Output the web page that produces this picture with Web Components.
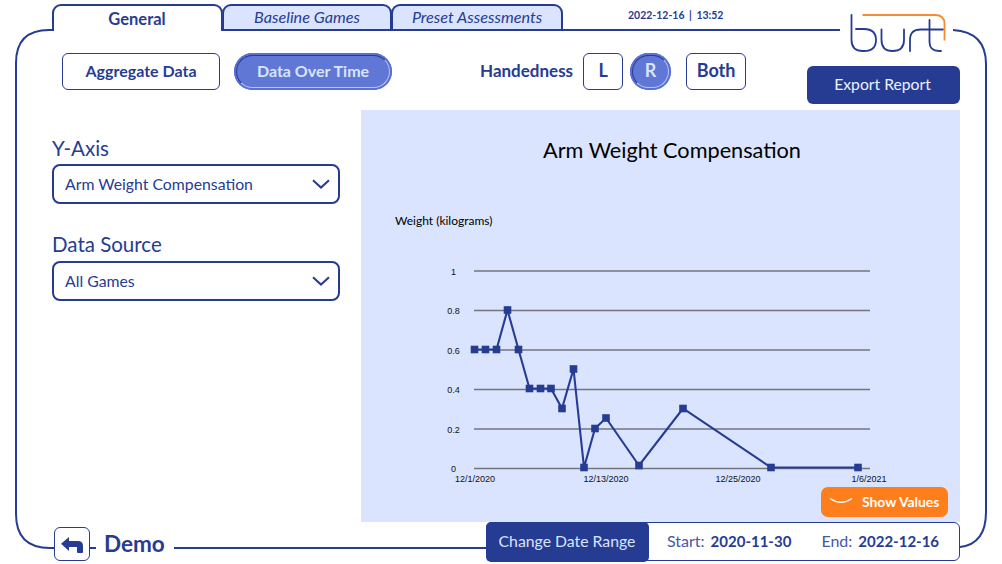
<!DOCTYPE html>
<html>
<head>
<meta charset="utf-8">
<title>Burt report</title>
<style>
  html, body { margin: 0; padding: 0; background: #fff; }
  body { font-family: Lato, "Liberation Sans", sans-serif; color: #263c93; }
</style>
</head>
<body>
<app-shell></app-shell>

<script>
const NAVY = '#263c93'

class TabBar extends HTMLElement {
  constructor() {
    super()
    this.attachShadow({ mode: 'open' })
    this.shadowRoot.innerHTML = `
      <style>
        :host { display: flex; height: 31px; padding-left: 52px; align-items: stretch; box-sizing: border-box; padding-top: 4px; }
        .tab {
          box-sizing: border-box;
          border: 2px solid ${NAVY};
          border-radius: 9px 9px 0 0;
          background: #dae4fe;
          font: italic 16.2px Lato, sans-serif;
          text-align: center;
          line-height: 22px;
          height: 27px;
          margin-right: -1px;
        }
        .tab.active {
          background: #fff;
          border-bottom: 0;
          font: bold 16.5px Lato, sans-serif;
          line-height: 27px;
        }
        .general { width: 171px; padding-right: 1px; }
        .baseline { width: 170px; }
        .preset { width: 172px; }
      </style>
      <div class="tab active general">General</div>
      <div class="tab baseline">Baseline Games</div>
      <div class="tab preset">Preset Assessments</div>
    `
  }
}

class ToggleButton extends HTMLElement {
  constructor() {
    super()
    this.attachShadow({ mode: 'open' })
    this.shadowRoot.innerHTML = `
      <style>
        :host {
          display: flex;
          position: relative;
          box-sizing: border-box;
          height: 37px;
          border: 1.5px solid ${NAVY};
          border-radius: 6px;
          background: #fff;
          font: bold 16px Lato, sans-serif;
          color: ${NAVY};
        }
        :host([active]) {
          border: 0;
          border-radius: 19px;
          background: #6077d6;
          color: #d9e4fd;
          box-shadow: inset 0 0 0 3px #5a70d2;
        }
        .ring { display: none; }
        :host([active]) .ring {
          display: block;
          position: absolute;
          inset: 2px;
          border-radius: 17px;
          border: 1.5px solid #b9c6f2;
          border-top-color: #263c93;
          border-left-color: #263c93;
        }
        .wrap { display: flex; position: absolute; inset: 0; align-items: center; justify-content: center; padding-bottom: 3px; box-sizing: border-box; }
      </style>
      <span class="ring"></span>
      <span class="wrap"><slot></slot></span>
    `
  }
}

class SelectBox extends HTMLElement {
  constructor() {
    super()
    this.attachShadow({ mode: 'open' })
    this.shadowRoot.innerHTML = `
      <style>
        :host { display: block; }
        label {
          display: block;
          font: 20.5px/24px Lato, sans-serif;
          color: ${NAVY};
          margin-top: var(--label-top, 0);
          margin-bottom: var(--label-gap, 5px);
        }
        .box {
          box-sizing: border-box;
          height: 40px;
          display: flex;
          align-items: center;
          justify-content: space-between;
          padding: 0 8px 2px 11px;
          border: 2px solid ${NAVY};
          border-radius: 8px;
          font: 15.8px Lato, sans-serif;
          background: #fff;
        }
        svg { display: block; margin-top: 2px; }
      </style>
      <label>${this.getAttribute('label')}</label>
      <div class="box">
        <span>${this.getAttribute('value')}</span>
        <svg width="18" height="10" viewBox="0 0 18 10"><path d="M1 1.2 L9 8.6 L17 1.2" fill="none" stroke="${NAVY}" stroke-width="2"/></svg>
      </div>
    `
  }
}

class LineChart extends HTMLElement {
  constructor() {
    super()
    this.attachShadow({ mode: 'open' })
    const points = [
      [474.5, 349.5], [485.5, 349.5], [496.5, 349.5], [507.5, 310], [518.5, 349.5],
      [529.5, 388.5], [540.5, 388.5], [551, 388.5], [562, 408.5], [573.5, 369],
      [584, 467.5], [595, 428.5], [606, 418], [639, 465.5], [683, 408.5],
      [771, 467.5], [858, 467.5],
    ]
    const yTicks = [['1', 271], ['0.8', 310.5], ['0.6', 350], ['0.4', 389.5], ['0.2', 429], ['0', 468.5]]
    const grid = yTicks.map(([t, y]) => `
      <line x1="474" x2="870" y1="${y}" y2="${y}" stroke="#73757c" stroke-width="1.5"/>
      <text x="453.5" y="${y + 3.5}" text-anchor="middle" class="tick">${t}</text>
    `).join('')
    const xTicks = [['12/1/2020', 475], ['12/13/2020', 606], ['12/25/2020', 738], ['1/6/2021', 869]]
      .map(([t, x]) => `<text x="${x}" y="481.5" text-anchor="middle" class="tick">${t}</text>`).join('')
    const marks = points.map(([x, y]) => `<rect x="${x - 3.8}" y="${y - 3.8}" width="7.6" height="7.6" fill="${NAVY}"/>`).join('')
    // the svg viewBox keeps page coordinates so the numbers above can be read against the screenshot
    this.shadowRoot.innerHTML = `
      <style>
        :host { display: block; position: relative; background: #dae4fe; }
        svg { display: block; width: 100%; height: 100%; }
        .title { font: 21.7px Lato, sans-serif; fill: #000; }
        .axis { font: 12px Lato, sans-serif; fill: #000; }
        .tick { font: 9px "Liberation Sans", sans-serif; fill: #111; }
      </style>
      <svg viewBox="361 110 599 412">
        <text x="672" y="158" text-anchor="middle" class="title">Arm Weight Compensation</text>
        <text x="395" y="225" class="axis">Weight (kilograms)</text>
        ${grid}
        ${xTicks}
        <polyline points="${points.map((p) => p.join(',')).join(' ')}" fill="none" stroke="${NAVY}" stroke-width="2.1"/>
        ${marks}
      </svg>
      <slot></slot>
    `
  }
}

class ShowValues extends HTMLElement {
  constructor() {
    super()
    this.attachShadow({ mode: 'open' })
    this.shadowRoot.innerHTML = `
      <style>
        :host {
          position: absolute;
          right: 12px;
          bottom: 5px;
          display: flex;
          box-sizing: border-box;
          width: 127px;
          height: 30px;
          align-items: center;
          gap: 9px;
          padding: 0 0 2px 8px;
          background: #fd7e1a;
          border-radius: 7px;
          color: #fff;
          font: bold 13.9px Lato, sans-serif;
        }
      </style>
      <svg width="24" height="8" viewBox="0 0 24 8"><path d="M1 1.5 Q12 9 23 1.5" fill="none" stroke="#fff" stroke-width="1.5"/></svg>
      <span>Show Values</span>
    `
  }
}

class BurtLogo extends HTMLElement {
  constructor() {
    super()
    this.attachShadow({ mode: 'open' })
    this.shadowRoot.innerHTML = `
      <style>
        :host { display: block; width: 98px; height: 40px; }
        svg { display: block; }
      </style>
      <svg width="98" height="40" viewBox="850 12 98 40" role="img" aria-label="burt">
        <g fill="none" stroke="${NAVY}" stroke-width="1.8" stroke-linecap="round">
          <path d="M851.5 15 V40 Q851.5 51 863 51 H864 Q876 51 876 40 Q876 29 864 29 H856"/>
          <path d="M881.5 29.5 V40 Q881.5 51 892.5 51 Q904 51 904 40 V29.5"/>
          <path d="M910 51 V40 Q910 29.5 921 29.5 H943"/>
          <path d="M929.5 20 V42 Q929.5 51 939 51 H941"/>
        </g>
        <path d="M862.5 15 H935 Q944.5 15 944.5 24 V40.5" fill="none" stroke="#f68b33" stroke-width="1.8"/>
      </svg>
    `
  }
}

class DateBar extends HTMLElement {
  constructor() {
    super()
    this.attachShadow({ mode: 'open' })
    this.shadowRoot.innerHTML = `
      <style>
        :host {
          display: flex;
          box-sizing: border-box;
          width: 474px;
          height: 39px;
          align-items: stretch;
          border: 1.5px solid ${NAVY};
          border-radius: 6px;
          background: #fff;
          font: 16px Lato, sans-serif;
          color: ${NAVY};
        }
        button {
          all: unset;
          box-sizing: border-box;
          width: 163px;
          padding-bottom: 3px;
          text-align: center;
          background: ${NAVY};
          color: #d9e4fd;
          border-radius: 5px;
          margin: -1.5px 0 -1.5px -1.5px;
          font: 15.8px Lato, sans-serif;
        }
        .dates { display: flex; align-items: center; padding: 0 0 2px 18.5px; }
        .label { color: #4459a8; margin-right: 6px; }
        b { font: bold 15px Lato, sans-serif; }
        .end { margin-left: 30px; }
      </style>
      <button>Change Date Range</button>
      <div class="dates">
        <span class="label">Start:</span><b>2020-11-30</b>
        <span class="label end">End:</span><b>2022-12-16</b>
      </div>
    `
  }
}

class AppShell extends HTMLElement {
  constructor() {
    super()
    this.attachShadow({ mode: 'open' })
    this.shadowRoot.innerHTML = `
      <style>
        :host { display: block; position: relative; width: 1002px; height: 564px; overflow: hidden; }
        .frame { position: absolute; inset: 0; }
        .page { position: relative; display: flex; flex-direction: column; height: 100%; }
        .head { display: flex; height: 31px; }
        .stamp { font: bold 10.5px Lato, sans-serif; word-spacing: 2px; margin: 9px 0 0 66px; white-space: pre; }
        .logoSlot { position: absolute; left: 850px; top: 12px; }
        .toolbar { display: flex; align-items: flex-start; padding: 22px 42px 0 62px; height: 57px; box-sizing: border-box; }
        .aggregate { width: 158px; }
        .overTime { width: 158px; margin-left: 14px; }
        .handLabel { font: bold 17px Lato, sans-serif; margin: 7px 10px 0 88px; }
        .l { width: 40px; font-size: 18px; }
        .r { width: 41px; margin-left: 7px; font-size: 18px; }
        .both { width: 60px; margin-left: 15px; font-size: 18px; }
        .export {
          box-sizing: border-box;
          width: 153px;
          height: 38px;
          padding: 0 2px 2px 0;
          margin: 13px 0 0 auto;
          display: flex;
          align-items: center;
          justify-content: center;
          background: ${NAVY};
          color: #eef2ff;
          border-radius: 6px;
          font: 15.7px Lato, sans-serif;
        }
        .main { display: flex; height: 412px; margin-top: 22px; padding: 0 42px 0 52px; }
        .side { width: 288px; margin-right: 21px; padding-top: 25px; display: flex; flex-direction: column; gap: 28px; }
        .side select-box:first-child { --label-top: 1px; --label-gap: 4px; }
        line-chart { flex: 1; }
        .foot { display: flex; align-items: center; height: 39px; padding-left: 54px; padding-right: 42px; }
        .back {
          box-sizing: border-box;
          width: 36px;
          height: 34px;
          align-self: flex-end;
          border: 1.5px solid ${NAVY};
          border-radius: 6px;
          background: #fff;
          display: flex;
          align-items: center;
          justify-content: center;
        }
        .name { font: bold 22.5px Lato, sans-serif; margin: 3px 0 0 14px; }
        date-bar { margin-left: auto; }
      </style>
      <svg class="frame" width="1002" height="564" viewBox="0 0 1002 564">
        <g fill="none" stroke="${NAVY}" stroke-width="2">
          <path d="M52 30 H49 Q16 30 16 63 V514 Q16 548 50 548 H54"/>
          <path d="M561 30 H840"/>
          <path d="M953 30 Q986 32 986 64 V512 Q986 544 960 547"/>
          <path d="M90 548 H96"/>
          <path d="M174 548 H487"/>
        </g>
      </svg>
      <div class="page">
        <div class="head">
          <tab-bar></tab-bar>
          <div class="stamp">2022-12-16 | 13:52</div>
        </div>
        <div class="logoSlot"><burt-logo></burt-logo></div>
        <div class="toolbar">
          <toggle-button class="aggregate">Aggregate Data</toggle-button>
          <toggle-button class="overTime" active>Data Over Time</toggle-button>
          <span class="handLabel">Handedness</span>
          <toggle-button class="l">L</toggle-button>
          <toggle-button class="r" active>R</toggle-button>
          <toggle-button class="both">Both</toggle-button>
          <div class="export">Export Report</div>
        </div>
        <div class="main">
          <div class="side">
            <select-box label="Y-Axis" value="Arm Weight Compensation"></select-box>
            <select-box label="Data Source" value="All Games"></select-box>
          </div>
          <line-chart><show-values></show-values></line-chart>
        </div>
        <div class="foot">
          <div class="back">
            <svg width="24" height="22" viewBox="0 0 24 22"><path d="M1 10.7 L9 4 V8 H18 Q23 8 23 13 V19 Q23 20 22 20 H18 Q17 20 17 19 V14 H9 V18 Z" fill="${NAVY}"/></svg>
          </div>
          <span class="name">Demo</span>
          <date-bar></date-bar>
        </div>
      </div>
    `
  }
}

customElements.define('tab-bar', TabBar)
customElements.define('toggle-button', ToggleButton)
customElements.define('select-box', SelectBox)
customElements.define('line-chart', LineChart)
customElements.define('show-values', ShowValues)
customElements.define('burt-logo', BurtLogo)
customElements.define('date-bar', DateBar)
customElements.define('app-shell', AppShell)
</script>
</body>
</html>
